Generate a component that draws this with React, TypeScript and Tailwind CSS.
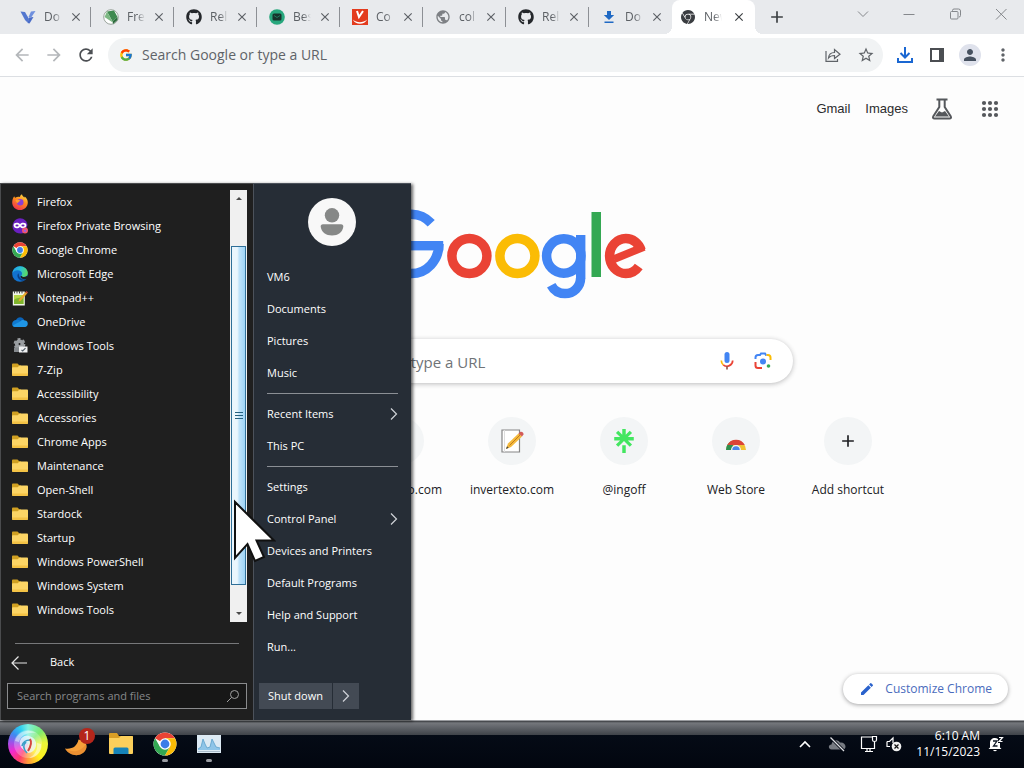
import React from "react";
import { FcGoogle } from "react-icons/fc";
import { FaGithub } from "react-icons/fa";
import { SiGooglechrome, SiLinktree } from "react-icons/si";
import {
  MdAdd,
  MdArrowBack,
  MdArrowForward,
  MdClose,
  MdEdit,
  MdMoreVert,
  MdPerson,
  MdPublic,
  MdRefresh,
  MdStarOutline,
} from "react-icons/md";

/* ---------- Icons ---------- */

function ChromeIcon({ className }: { className: string }) {
  return (
    <svg viewBox="0 0 48 48" className={className} aria-hidden="true">
      <circle cx="24" cy="24" r="23" fill="#fff" />
      <path d="M24 24 4.1 12.5A23 23 0 0 1 43.9 12.5L24 12.5z" fill="#ea4335" />
      <path d="M4.1 12.5A23 23 0 0 0 24 47L34 29.7 14 29.7z" fill="#34a853" />
      <path d="M43.9 12.5A23 23 0 0 1 24 47L34 29.7 24 12.5z" fill="#fbbc05" />
      <circle cx="24" cy="24" r="11.5" fill="#fff" />
      <circle cx="24" cy="24" r="8.8" fill="#3b7de8" />
    </svg>
  );
}

function FirefoxIcon() {
  return (
    <svg viewBox="0 0 16 16" className="size-4" aria-hidden="true">
      <defs>
        <linearGradient id="ff" x1="0.8" y1="0" x2="0.3" y2="1">
          <stop offset="0" stopColor="#ffe14a" />
          <stop offset="0.45" stopColor="#ff8a1e" />
          <stop offset="1" stopColor="#f0304f" />
        </linearGradient>
      </defs>
      <path d="M2.2 2.2c.2.7.6 1.2 1.2 1.5C4.500 3 6 2.600 8 3 8 1.700 9 .6 10 .2c0 1.400 1.500 2.200 2.200 3.200.5-.1.500-.600.400-1C14.800 3.800 15.800 6 15.800 8.400 15.800 12.600 12.300 16 8 16S.200 12.600.200 8.400C.200 6 1 3.800 2.200 2.200z" fill="url(#ff)" />
      <circle cx="8.200" cy="8.300" r="3.300" fill="#8a3fd6" />
      <path d="M3.500 6.200c1.600-.8 3.600-.6 5.200.8-1.500 0-2.500 1-2.700 2.200-1.200-.4-2.200-1.400-2.500-3z" fill="#ffa02a" />
    </svg>
  );
}

function PrivateIcon() {
  return (
    <svg viewBox="0 0 16 16" className="size-4" aria-hidden="true">
      <path d="M8 .3c4 0 7.200 3 7.500 6.800L13 14.500C9 16.500 3 15.500 1 11-.7 6 2.600.3 8 .3z" fill="#6a1fc0" />
      <path d="M1.600 7.300C1.600 4.200 6.400 4.200 8 6.200c1.600-2 6.400-2 6.400 1.100 0 3.600-4.600 3.800-6.400 1.500-1.800 2.300-6.400 2.100-6.400-1.500z" fill="#fff" />
      <ellipse cx="5" cy="7.500" rx="1.600" ry="1.100" fill="#6a1fc0" />
      <ellipse cx="11" cy="7.500" rx="1.600" ry="1.100" fill="#6a1fc0" />
      <circle cx="13" cy="12.600" r="3" fill="#f0556b" />
      <circle cx="13" cy="12.800" r="1.300" fill="#a05ce0" />
    </svg>
  );
}

function EdgeIcon() {
  return (
    <svg viewBox="0 0 16 16" className="size-4" aria-hidden="true">
      <defs>
        <linearGradient id="edgeTop" x1="0" y1="0.3" x2="1" y2="0.6">
          <stop offset="0" stopColor="#1f9ee8" />
          <stop offset="0.5" stopColor="#2cc3d2" />
          <stop offset="1" stopColor="#5fdc5a" />
        </linearGradient>
      </defs>
      <circle cx="8" cy="8" r="7.800" fill="#1273cf" />
      <path d="M.3 7.400C.8 3.200 4 .2 8 .2c4.500 0 7.800 3.200 7.800 6.800 0 2.600-2 4-4.200 4-1.500 0-2.400-.6-2.400-1.200 0-.5.900-.9.900-2.300C10.100 5.500 8 4.200 5.600 4.200 3 4.200 1 5.500.3 7.400z" fill="url(#edgeTop)" />
      <path d="M6.300 7.200c-2 2.700-.3 7 4.200 7.500 1.600.1 3-.6 4-1.700-2.500 1-6.300.3-7.200-2.400-.4-1.300-.3-2.600-1-3.400z" fill="#0a3f86" />
      <path d="M9.600 9.800c.5 1.600 3.500 1.600 5.300.2l1.100.5-1.200 2.200c-2.200 1-6 .4-6.400-2.200z" fill="#1f1f1f" />
    </svg>
  );
}

function NotepadIcon() {
  return (
    <svg viewBox="0 0 16 16" className="size-4" aria-hidden="true">
      <path d="M.8 1.500h12v14h-12z" fill="#f2f6ea" />
      <path d="M2 5h9.500v9H2z" fill="#b7d84a" />
      <path d="M2 10c3-3 6-1 9.500-4v8H2z" fill="#7fb52c" />
      <path d="M2.500.8v2.600M5 .8v2.600M7.500.8v2.600M10 .8v2.600" stroke="#4a4a4a" strokeWidth="1" />
      <path d="m6.500 11.500.7-2.300L13.500 2l1.700 1.400-6.500 7.400z" fill="#e9a72b" />
      <path d="m13.500 2 .9-1 1.600 1.400-.8 1z" fill="#d04a35" />
    </svg>
  );
}

function OneDriveIcon() {
  return (
    <svg viewBox="0 0 16 16" className="size-4" aria-hidden="true">
      <path d="M4 6.200C5.500 2.300 10.500 2 12.300 6.200L8 10z" fill="#0a63b8" />
      <path d="M3.800 6c2-.4 3.200.2 4.600 1.200L2 12.800C-.8 12-.6 6.500 3.800 6z" fill="#1079cf" />
      <path d="M8 7.500c2-1.800 4-1.700 5-.9 3.600.4 3.700 5.600.3 6.300H3.200c-1.200 0-2-.6-2.500-1.500z" fill="#1f96e6" />
    </svg>
  );
}

function ToolsIcon() {
  return (
    <svg viewBox="0 0 16 16" className="size-4" aria-hidden="true">
      <g fill="none" stroke="#9a9ea2">
        <circle cx="7.500" cy="6" r="2.800" strokeWidth="3.600" />
        <circle cx="7.500" cy="6" r="5" strokeWidth="1.800" strokeDasharray="3 2.240" />
      </g>
      <path d="M2 9.500h5V14H2z" fill="#85898d" />
      <path d="M7 8.500h8.500v6H7z" fill="#f0f1f2" />
      <path d="m9.500 12 1.200 1 2.800-2.800" stroke="#55606a" fill="none" strokeWidth="1.200" />
    </svg>
  );
}

function FolderIcon() {
  return (
    <svg viewBox="0 0 16 16" className="size-4" aria-hidden="true">
      <path d="M0 2.800C0 2 .4 1.600 1.200 1.600h4.300l2 2H9V8H0z" fill="#d0a022" />
      <path d="M0 12.700V6.200c0-.8.400-1 1.200-1h4.400L7.500 3.400h7.300c.8 0 1.200.4 1.200 1.200v8.100c0 .8-.4 1.200-1.200 1.200H1.200C.4 13.900 0 13.500 0 12.700z" fill="#fcd565" />
      <path d="M0 11.500h16v1.200c0 .8-.4 1.200-1.200 1.200H1.200C.4 13.900 0 13.500 0 12.700z" fill="#f3c245" />
    </svg>
  );
}

function GoogleLogo() {
  return (
    <svg viewBox="0 0 272 92" className="h-[92px] w-[272px]" role="img" aria-label="Google">
      <g fill="none" strokeWidth="9.500">
        <ellipse cx="35.300" cy="34.900" rx="27.700" ry="29.700" pathLength="360" strokeDasharray="315 45" stroke="#4285f4" />
        <circle cx="93.400" cy="47" r="17.500" stroke="#ea4335" />
        <circle cx="141.400" cy="47" r="17.500" stroke="#fbbc05" />
        <circle cx="187.800" cy="47" r="17.200" stroke="#4285f4" />
        <circle cx="189" cy="69" r="15.600" pathLength="360" strokeDasharray="152 208" stroke="#4285f4" />
        <ellipse cx="249.800" cy="47" rx="16.200" ry="17.500" pathLength="360" strokeDasharray="302 58" strokeDashoffset="-38" stroke="#ea4335" />
        <line x1="238" y1="50.200" x2="268" y2="37.800" strokeWidth="7.800" stroke="#ea4335" />
      </g>
      <rect x="35" y="32" width="32.200" height="9.400" fill="#4285f4" />
      <rect x="200" y="26" width="9.400" height="43.500" fill="#4285f4" />
      <rect x="215.500" y="3" width="9.500" height="65" fill="#34a853" />
    </svg>
  );
}

/* ---------- Browser ---------- */

const favicons: Record<string, React.ReactNode> = {
  vector: (
    <svg viewBox="0 0 16 16" className="size-4" aria-hidden="true">
      <path d="M.5 2.500 5 3l4 7-1.500 3.500L5 11z" fill="#5377cf" />
      <path d="m11 2.500 4.500-.5-4 6H8.500z" fill="#6f90de" />
      <path d="m9 8.500 4.500-.5-4 6.500L7.500 14z" fill="#4a6dc8" />
    </svg>
  ),
  green: (
    <svg viewBox="0 0 16 16" className="size-4" aria-hidden="true">
      <circle cx="8" cy="8" r="7.300" fill="#fff" stroke="#9aa59c" />
      <path d="m4 2.500 7-1 3.500 6.500-5 4.500z" fill="#3f8a50" />
      <path d="M4 2.500 1.500 8l7.500 5 .5-.5z" fill="#7db884" />
      <path d="m9.500 12.500 5-4.500v3L10 15z" fill="#2c6b3c" />
    </svg>
  ),
  github: <FaGithub className="size-4 text-[#24272b]" />,
  mail: (
    <svg viewBox="0 0 16 16" className="size-4" aria-hidden="true">
      <circle cx="8" cy="8" r="7.800" fill="#27a77d" />
      <rect x="3.500" y="4.500" width="9" height="7" rx="1.500" fill="#17332c" />
      <path d="m5 6.500 3 2 3-2" stroke="#27a77d" fill="none" strokeWidth="0.600" />
    </svg>
  ),
  red: (
    <svg viewBox="0 0 16 16" className="size-4" aria-hidden="true">
      <path d="M0 0h16v16H0z" fill="#e33b1e" />
      <path d="m5 2 2 6L11 2" fill="none" stroke="#fff" strokeWidth="2" />
      <path d="M.8 10.500c4 3.500 10 3.500 14.400 0-2.500 5.500-11.500 6-14.400 0z" fill="#fff" />
    </svg>
  ),
  globe: <MdPublic className="size-4 text-[#7d8084]" />,
  down: (
    <svg viewBox="0 0 16 16" className="size-4" aria-hidden="true">
      <path d="M6 2h4v4h3.200L8 11 2.800 6H6zM3.500 12.500h9V14h-9z" fill="#1f69c4" />
    </svg>
  ),
};

const tabs = [
  { icon: "vector", label: "Do" },
  { icon: "green", label: "Fre" },
  { icon: "github", label: "Rel" },
  { icon: "mail", label: "Bes" },
  { icon: "red", label: "Co" },
  { icon: "globe", label: "col" },
  { icon: "github", label: "Rel" },
  { icon: "down", label: "Do" },
];

const fade = "whitespace-nowrap text-left [mask-image:linear-gradient(to_right,black_10px,transparent_18px)]";

function TabStrip() {
  return (
    <div className="flex h-[34px] shrink-0 bg-[#e8eaed] pl-2 text-xs text-[#5c6065]">
      <div role="tablist" className="flex">
        {tabs.map((tab, i) => (
          <div key={i} className="flex w-[83px] items-center pl-3">
            <button role="tab" className="flex items-center gap-2">
              {favicons[tab.icon]}
              <span className={`w-6 ${fade}`}>{tab.label}</span>
            </button>
            <button aria-label="Close tab" className="ml-px">
              <MdClose className="size-3.5" />
            </button>
            {i < tabs.length - 1 && <span className="ml-auto h-5 w-px bg-[#8d9095]" />}
          </div>
        ))}
        <div className="relative flex w-[83px] items-center rounded-t-lg bg-white pl-2">
          <span className="absolute bottom-0 -left-2 size-2 bg-[radial-gradient(circle_at_0_0,#e8eaed_8px,white_8px)]" />
          <span className="absolute -right-2 bottom-0 size-2 bg-[radial-gradient(circle_at_100%_0,#e8eaed_8px,white_8px)]" />
          <button role="tab" aria-selected="true" className="flex items-center gap-2">
            <SiGooglechrome className="size-4 p-px text-[#3a3d41]" />
            <span className={`w-7 ${fade}`}>New</span>
          </button>
          <button aria-label="Close tab">
            <MdClose className="size-3.5 text-[#3c4043]" />
          </button>
        </div>
      </div>
      <button aria-label="New tab" className="ml-3 self-center">
        <MdAdd className="size-5 text-[#3c4043]" />
      </button>
      <div className="ml-auto flex h-7 text-[#85888c]">
        {[
          { name: "Search tabs", d: "M3 5.500 8 10.500 13 5.500" },
          { name: "Minimize", d: "M2.500 8.500h11" },
          { name: "Restore", d: "M5.500 5V4.500q0-1.500 1.500-1.500h4.500q2 0 2 2v4.500q0 1.500-1.500 1.500M4.500 5.500h5.500q1 0 1 1v5.500q0 1-1 1H4.500q-1 0-1-1V6.500q0-1 1-1z" },
          { name: "Close", d: "m3 3 10.500 10.500M13.500 3 3 13.500" },
        ].map((c) => (
          <button key={c.name} aria-label={c.name} className="flex w-[46px] items-center justify-center">
            <svg viewBox="0 0 16 16" className="size-4" fill="none" stroke="currentColor">
              <path d={c.d} />
            </svg>
          </button>
        ))}
      </div>
    </div>
  );
}

function Toolbar() {
  return (
    <div className="flex h-[43px] shrink-0 items-center border-b border-[#dcdfe3] bg-white pr-[11px] pl-3 text-[#5f6368]">
      <div className="flex gap-3">
        <button aria-label="Back">
          <MdArrowBack className="size-5 text-[#b4b7ba]" />
        </button>
        <button aria-label="Forward">
          <MdArrowForward className="size-5 text-[#b4b7ba]" />
        </button>
        <button aria-label="Reload">
          <MdRefresh className="size-5 text-[#4c4f53]" />
        </button>
      </div>
      <div className="ml-3 flex h-[34px] grow items-center rounded-full bg-[#f1f3f4] pr-2 pl-2.5">
        <FcGoogle className="size-4 p-px" />
        <input
          aria-label="Address bar"
          placeholder="Search Google or type a URL"
          className="ml-2 min-w-0 grow bg-transparent text-sm text-[#3c4043] outline-none placeholder:text-[#5f6368]"
        />
        <div className="flex items-center gap-4">
          <button aria-label="Share">
            <svg viewBox="0 0 16 16" className="size-4" fill="none" stroke="currentColor" strokeWidth="1.200">
              <path d="M1 4v10.400h11.500V12M3.500 11c.3-3.500 2.500-5.500 6-5.500V2.500l5.500 4.700-5.500 4.300V8.500c-3 0-4.800.9-6 2.500z" />
            </svg>
          </button>
          <button aria-label="Bookmark">
            <MdStarOutline className="size-[18px]" />
          </button>
        </div>
      </div>
      <div className="ml-3 flex items-center gap-3">
        <button aria-label="Downloads">
          <svg viewBox="0 0 20 20" className="size-5" fill="none" stroke="#1a67d2" strokeWidth="2">
            <path d="M10 2v10M5.500 8 10 12.500 14.500 8M3 13v4h14v-4" />
          </svg>
        </button>
        <button aria-label="Side panel">
          <svg viewBox="0 0 20 20" className="size-5">
            <path d="M3 3h14v14H3z" fill="#4b4e52" />
            <path d="M5 5h7v10H5z" fill="#fff" />
          </svg>
        </button>
        <button aria-label="Profile" className="flex size-[22px] items-center justify-center rounded-full bg-[#dfe2ec]">
          <MdPerson className="size-[18px] text-[#45505f]" />
        </button>
        <button aria-label="Menu">
          <MdMoreVert className="size-5" />
        </button>
      </div>
    </div>
  );
}

const shortcuts = [
  { label: "invertexto.com", kind: "none" },
  { label: "invertexto.com", kind: "note" },
  { label: "@ingoff", kind: "tree" },
  { label: "Web Store", kind: "store" },
  { label: "Add shortcut", kind: "add" },
];

const shortcutIcons: Record<string, React.ReactNode> = {
  none: null,
  note: (
    <svg viewBox="0 0 24 26" className="h-[26px] w-6" aria-hidden="true">
      <path d="M2 2h17.500v22H2z" fill="#fff" stroke="#858585" strokeWidth="1.200" />
      <path d="M4.500 2v22" stroke="#ddd" />
      <path d="m6 21 2-5.500L18.500 5.500 22 8.500 11 19z" fill="#f4b93c" />
      <path d="M9.500 17.500 20 7" stroke="#c27c1c" />
      <path d="m18.500 5.500 2-1.700c1.500-.5 3.300 1 3 2.700L22 8.500z" fill="#d35b58" />
      <path d="m6 21 1-2.800 1.700 1.500z" fill="#444" />
    </svg>
  ),
  tree: <SiLinktree className="size-6 text-[#43e660]" />,
  store: (
    <svg viewBox="0 0 24 24" className="size-6" aria-hidden="true">
      <path d="M2 21a10 10 0 0 1 20 0z" fill="#f1c232" />
      <path d="M2 21a10 10 0 0 1 5-8.700L11 21z" fill="#2f8f4e" />
      <path d="M3.300 16a10 10 0 0 1 17.500 0H12z" fill="#db4437" />
      <path d="M7 21a5 5 0 0 1 10 0z" fill="#f4f4f4" />
      <path d="M8.300 21a3.700 3.700 0 0 1 7.400 0z" fill="#4a86e8" />
    </svg>
  ),
  add: <MdAdd className="size-5 text-[#202124]" />,
};

function NewTabPage() {
  return (
    <main className="relative flex min-h-0 grow flex-col items-center bg-[#fdfdfd]">
      <nav className="flex h-16 items-center self-end pr-[22px] font-['Liberation_Sans',Arial,sans-serif] text-[13px] text-[#2b2c2e]">
        <a href="#gmail">Gmail</a>
        <a href="#images" className="ml-[15px]">
          Images
        </a>
        <button aria-label="Search Labs" className="ml-[22px]">
          <svg viewBox="0 0 24 24" className="size-6" fill="none" stroke="#55585c" strokeWidth="2">
            <path d="M6.500 2.500h11M9.300 3v7L3.200 19.500q-.8 2 1.300 2h15q2.100 0 1.300-2L14.700 10V3" />
            <path d="m9 14-4 5.500h14L15 14l-3 1.500z" fill="#55585c" stroke="none" />
          </svg>
        </button>
        <button aria-label="Google apps" className="ml-6">
          <svg viewBox="0 0 24 24" className="size-6" fill="#55585c">
            {[6, 12, 18].map((y) => [6, 12, 18].map((x) => <circle key={`${x}-${y}`} cx={x} cy={y} r="2.100" />))}
          </svg>
        </button>
      </nav>
      <div className="mt-[68px]">
        <GoogleLogo />
      </div>
      <div className="mt-[38px] flex h-11 w-[562px] items-center rounded-full bg-white pr-5 pl-14 shadow-[0_1px_5px_rgba(32,33,36,0.3)]">
        <input
          aria-label="Search"
          placeholder="Search Google or type a URL"
          className="min-w-0 grow bg-transparent pt-0.5 text-[15px] outline-none placeholder:text-[#6f7377]"
        />
        <button aria-label="Search by voice" className="mr-4">
          <svg viewBox="0 0 20 20" className="size-5">
            <rect x="7.500" y="1" width="5" height="11" rx="2.500" fill="#4285f4" />
            <path d="M4.300 9.500a5.700 5.700 0 0 0 2 4.300" stroke="#fbbc05" strokeWidth="1.700" fill="none" />
            <path d="M15.700 9.500a5.700 5.700 0 0 1-9.400 4.300" stroke="#ea4335" strokeWidth="1.700" fill="none" />
            <path d="M10 15v3.500" stroke="#9a5a4a" strokeWidth="1.700" />
          </svg>
        </button>
        <button aria-label="Search by image">
          <svg viewBox="0 0 20 20" className="size-5" fill="none" strokeWidth="2">
            <path d="M2.500 8V6.500q0-2.500 2.500-2.500h2l1-1.500h4l1 1.500h.5" stroke="#4285f4" />
            <path d="M13.500 4H15q2.500 0 2.500 2.500V9" stroke="#fbbc05" />
            <path d="M2.500 11v3.500Q2.500 17 5 17h4" stroke="#ea4335" />
            <circle cx="10" cy="10.500" r="3" fill="#4285f4" />
            <circle cx="15.500" cy="15" r="1.800" fill="#34a853" />
          </svg>
        </button>
      </div>
      <div className="mt-[34px] flex w-[784px] justify-end">
        {shortcuts.map((s, i) => (
          <a key={i} href="#shortcut" className="flex w-28 flex-col items-center">
            <span className="flex size-12 items-center justify-center rounded-full bg-[#f3f5f6]">{shortcutIcons[s.kind]}</span>
            <span className="mt-4 text-xs leading-[18px] text-[#202124]">{s.label}</span>
          </a>
        ))}
      </div>
      <button className="absolute right-4 bottom-4 flex h-[30px] items-center gap-2.5 rounded-full bg-white px-4 text-xs text-[#4a6cbd] shadow-[0_1px_4px_rgba(32,33,36,0.4)]">
        <MdEdit className="size-4 text-[#2a62cc]" />
        Customize Chrome
      </button>
    </main>
  );
}

/* ---------- Start menu ---------- */

const programs: [string, React.ReactNode][] = [
  ["Firefox", <FirefoxIcon />],
  ["Firefox Private Browsing", <PrivateIcon />],
  ["Google Chrome", <ChromeIcon className="size-4" />],
  ["Microsoft Edge", <EdgeIcon />],
  ["Notepad++", <NotepadIcon />],
  ["OneDrive", <OneDriveIcon />],
  ["Windows Tools", <ToolsIcon />],
  ["7-Zip", <FolderIcon />],
  ["Accessibility", <FolderIcon />],
  ["Accessories", <FolderIcon />],
  ["Chrome Apps", <FolderIcon />],
  ["Maintenance", <FolderIcon />],
  ["Open-Shell", <FolderIcon />],
  ["Stardock", <FolderIcon />],
  ["Startup", <FolderIcon />],
  ["Windows PowerShell", <FolderIcon />],
  ["Windows System", <FolderIcon />],
  ["Windows Tools", <FolderIcon />],
];

const places = [
  ["VM6", "Documents", "Pictures", "Music"],
  ["Recent Items", "This PC"],
  ["Settings", "Control Panel", "Devices and Printers", "Default Programs", "Help and Support", "Run..."],
];

const expandable = ["Recent Items", "Control Panel"];

function Chevron() {
  return (
    <svg viewBox="0 0 8 14" className="h-3.5 w-2" fill="none" stroke="#d0d3d8" strokeWidth="1.200" aria-hidden="true">
      <path d="m1 1.500 5.500 5.500L1 12.500" />
    </svg>
  );
}

function StartMenu() {
  return (
    <aside className="absolute bottom-12 left-0 flex text-[11px] text-white shadow-[2px_1px_3px_rgba(0,0,0,0.6)]">
      <div className="flex w-[253px] flex-col border-t border-l border-[#4a4b4d] bg-[#1f1f1f] pt-1.5 pr-1.5 pb-[11px] pl-1.5">
        <div className="flex">
          <ul className="grow">
            {programs.map(([name, icon], i) => (
              <li key={i}>
                <button className="flex h-6 items-center gap-[9px] pl-[5px]">
                  {icon}
                  {name}
                </button>
              </li>
            ))}
          </ul>
          <div className="flex w-[17px] flex-col bg-[#f0f0f0]">
            <button aria-label="Scroll up" className="flex h-14 justify-center pt-1.5">
              <svg viewBox="0 0 8 4" className="h-1 w-2">
                <path d="M1 4 4 1l3 3z" fill="#4a4a4a" />
              </svg>
            </button>
            <div className="mx-px flex grow items-center justify-center border border-[#2f6f98] bg-linear-to-r from-[#eaf6fd] from-40% via-[#bfe3fa] via-55% to-[#9ed3f5]">
              <div className="flex w-2 flex-col gap-0.5">
                <span className="h-px bg-[#24607f]" />
                <span className="h-px bg-[#24607f]" />
                <span className="h-px bg-[#24607f]" />
              </div>
            </div>
            <button aria-label="Scroll down" className="flex h-[37px] items-end justify-center pb-1.5">
              <svg viewBox="0 0 8 4" className="h-1 w-2">
                <path d="M1 0h6L4 3z" fill="#4a4a4a" />
              </svg>
            </button>
          </div>
        </div>
        <div className="mx-2 mt-[21px] h-px bg-[#77787a]" />
        <button className="flex h-[39px] items-center gap-[23px] pb-0.5 pl-1">
          <svg viewBox="0 0 16 14" className="h-3.5 w-4" fill="none" stroke="#e6e6e6" strokeWidth="1.200" aria-hidden="true">
            <path d="M16 7H1M7.500.5 1 7l6.500 6.500" />
          </svg>
          Back
        </button>
        <div className="flex h-[26px] items-center border border-[#8a8b8d] bg-[#171717] pr-1.5 pl-[9px]">
          <input
            aria-label="Search programs and files"
            placeholder="Search programs and files"
            className="min-w-0 grow bg-transparent outline-none placeholder:text-[#86888a]"
          />
          <svg viewBox="0 0 14 14" className="size-3.5" fill="none" stroke="#a0a0a0" aria-hidden="true">
            <circle cx="8.500" cy="5.500" r="4" />
            <path d="M5.600 8.400 1 13" />
          </svg>
        </div>
      </div>
      <div className="flex w-[158px] flex-col border-t border-l border-[#4c525b] bg-[#262d36] pt-3.5 pb-[11px]">
        <span className="mr-0.5 flex size-12 items-center justify-center self-center rounded-full bg-[#f8f8f8]">
          <svg viewBox="0 0 24 28" className="h-7 w-6" aria-hidden="true">
            <circle cx="12" cy="7.300" r="7.200" fill="#868887" />
            <path d="M3 16.300h18q2.500 0 2.300 2.500C22.500 24.500 18 27.500 12 27.500S1.500 24.500.700 18.800Q.5 16.300 3 16.300z" fill="#868887" />
          </svg>
        </span>
        <ul className="mx-[13px] mt-[15px]">
          {places.map((group, g) => (
            <React.Fragment key={g}>
              {g > 0 && <li aria-hidden="true" className="my-1 h-px bg-[#8b8f95]" />}
              {group.map((name) => (
                <li key={name}>
                  <button className="flex h-8 w-full items-center justify-between whitespace-nowrap">
                    {name}
                    {expandable.includes(name) && <Chevron />}
                  </button>
                </li>
              ))}
            </React.Fragment>
          ))}
        </ul>
        <div className="mt-auto ml-[5px] flex h-[26px] gap-px">
          <button className="w-[73px] bg-[#434a54]">Shut down</button>
          <button aria-label="More power options" className="flex w-[26px] items-center justify-center bg-[#434a54]">
            <Chevron />
          </button>
        </div>
      </div>
    </aside>
  );
}

/* ---------- Taskbar ---------- */

function Taskbar() {
  return (
    <footer className="flex h-12 shrink-0 items-center bg-[linear-gradient(#9a9ca0_1px,#3a3c40_1px,#74777c_3px,#3f4349_15px,#050b16_15px,#02060f)] px-2 text-xs text-white">
      <button aria-label="Start" className="relative size-10 rounded-full bg-[conic-gradient(#7ff0e0,#7bea70_45deg,#e8f53a_85deg,#fff01e_140deg,#ff9a3a_180deg,#ff3a6a_210deg,#f02ad0_245deg,#a050e8_275deg,#3c8cf0_305deg,#2ed0f0_335deg,#7ff0e0)]">
        <svg viewBox="0 0 40 40" className="size-10" fill="none" aria-hidden="true">
          <circle cx="20" cy="20" r="11" stroke="#fff" strokeOpacity="0.250" strokeWidth="6" />
          <path d="M7 17C9 8 20 4 28 9c-8-1-15 2-17 9zM33 20c1 8-5 14-12 14 6-3 9-8 8-15z" fill="#fff" fillOpacity="0.450" />
          <path d="M19 28c-5-2-8-6-7-11 1-4 5-6 9-5 5 1 8 5 7 10-1 4-4 7-8 7z" fill="#eef6fb" fillOpacity="0.850" />
          <path d="M19 29c-4-4-4-8-1-11M14 22c1-4 4-6 8-6" stroke="#3aa0c8" strokeWidth="1.600" />
          <path d="M22 15c2 3 1 7-2 12" stroke="#d5453f" strokeWidth="2" />
        </svg>
      </button>
      <div className="flex items-center gap-4 pl-[15px]">
        <button aria-label="Notifications, 1 new" className="relative flex size-7 items-center justify-center">
          <svg viewBox="0 0 28 28" className="size-7" aria-hidden="true">
            <path d="M2 18.500c7 1 12-2 13.500-9 7 1 9.500 5.500 7.500 9.500C19.500 27.500 7 27 2 18.500z" fill="#f7a13a" />
            <path d="M2 18.500c8 5 16 3 20.500-4 1 1.500 1.200 3 .5 4.500C19.500 27.500 7 27 2 18.500z" fill="#e0802a" fillOpacity="0.500" />
          </svg>
          <span className="absolute -top-0.5 -right-1 flex size-4 items-center justify-center rounded-full bg-[#b5261b]">1</span>
        </button>
        <button aria-label="File Explorer" className="flex size-7 items-center justify-center">
          <svg viewBox="0 0 28 28" className="size-7" aria-hidden="true">
            <path d="M2 4q0-1 1-1h7l2 3h13q1 0 1 1v8H2z" fill="#d99e25" />
            <path d="M2 8h10l2-2h11q1 0 1 1v16q0 1-1 1H3q-1 0-1-1z" fill="#fbcf5b" />
            <path d="M6.500 24v-5q0-1.500 1.500-1.500h12q1.500 0 1.500 1.500v5z" fill="#1683b8" />
          </svg>
        </button>
        <button aria-label="Google Chrome" className="relative flex size-7 items-center justify-center">
          <ChromeIcon className="size-6" />
          <span className="absolute -bottom-1 h-[3px] w-1.5 rounded-full bg-[#9b9ea4]" />
        </button>
        <button aria-label="Resource Monitor" className="relative flex size-7 items-center justify-center">
          <svg viewBox="0 0 24 20" className="h-5 w-6" aria-hidden="true">
            <path d="M0 1h24v18H0z" fill="#dceaf4" />
            <path d="M1 15 4 13l2-8 2 5 2 4 3-1 2-8 2 4 2 4 4 1v2H1z" fill="#8fc5e8" />
            <path d="M1 15 4 13l2-8 2 5 2 4 3-1 2-8 2 4 2 4 4 1" fill="none" stroke="#5a9fca" strokeWidth="0.800" />
            <path d="M1 17.500h22" stroke="#a9bccb" />
          </svg>
          <span className="absolute -bottom-1 h-[3px] w-1.5 rounded-full bg-[#9b9ea4]" />
        </button>
      </div>
      <div className="ml-auto flex items-center pr-3">
        <button aria-label="Show hidden icons">
          <svg viewBox="0 0 12 8" className="h-2 w-3" fill="none" stroke="#fff" strokeWidth="1.600">
            <path d="m1 7 5-5 5 5" />
          </svg>
        </button>
        <button aria-label="OneDrive offline" className="ml-[17px]">
          <svg viewBox="0 0 18 16" className="h-4 w-[18px]">
            <path d="M3.500 13.500C0 13 0 8.500 3.500 8.500 4 4 9.500 2.500 12 6.500c3-.5 5.500 1.500 5.500 4 0 1.800-1 3-3 3z" fill="#777b82" />
            <path d="M2.500 1.500 16 15" stroke="#070c16" strokeWidth="3" />
            <path d="M2.500 1.500 16 15" stroke="#dfe1e4" strokeWidth="1.200" />
          </svg>
        </button>
        <button aria-label="Network" className="ml-3.5">
          <svg viewBox="0 0 18 18" className="size-[18px]" fill="none" stroke="#fff" strokeWidth="1.200">
            <path d="M12 2H1.500v11.500h13V9M5 16.500h8M7 13.500v3M10 13.500v3M12.500 1.500h4V5q0 1.500-2 1.500T12.500 5zM14.500 6.500v4" />
          </svg>
        </button>
        <button aria-label="Volume muted" className="ml-2">
          <svg viewBox="0 0 16 16" className="size-4">
            <path d="M1 5.500h2.500L7 2v5M1 5.500v5h3" fill="none" stroke="#fff" strokeWidth="1.200" />
            <circle cx="10.500" cy="10.500" r="4.800" fill="#f2f2f2" />
            <path d="m8.500 8.500 4 4m0-4-4 4" stroke="#111" strokeWidth="1.200" />
          </svg>
        </button>
        <time className="ml-3.5 text-right leading-4">
          6:10 AM
          <br />
          11/15/2023
        </time>
        <button aria-label="Do not disturb" className="ml-2">
          <svg viewBox="0 0 16 16" className="size-4">
            <path d="M2 11.500V7c0-3 2-5 5-5 1 0 2 .3 3 1v4h2v4.500l1.500 1.500H.5z" fill="#fff" />
            <path d="M5 14h4q-2 2.500-4 0z" fill="#fff" />
            <path d="M5 5h4L5.500 10H9.500" fill="none" stroke="#111a28" strokeWidth="1.300" />
            <path d="M11 1.500h3.500L11 5.500h3.500" fill="none" stroke="#fff" strokeWidth="1.200" />
          </svg>
        </button>
      </div>
    </footer>
  );
}

export default function App() {
  return (
    <div className="relative flex h-screen flex-col overflow-hidden font-['Open_Sans','Noto_Sans',sans-serif]">
      <TabStrip />
      <Toolbar />
      <NewTabPage />
      <Taskbar />
      <StartMenu />
      <svg viewBox="0 0 44 68" className="pointer-events-none absolute bottom-[202px] left-[232px] h-[68px] w-11" aria-hidden="true">
        <path d="M3 4v56L15.500 46l7.500 17 9-4-7.500-16.500H42z" fill="#fff" stroke="#111" strokeWidth="2" />
      </svg>
    </div>
  );
}
